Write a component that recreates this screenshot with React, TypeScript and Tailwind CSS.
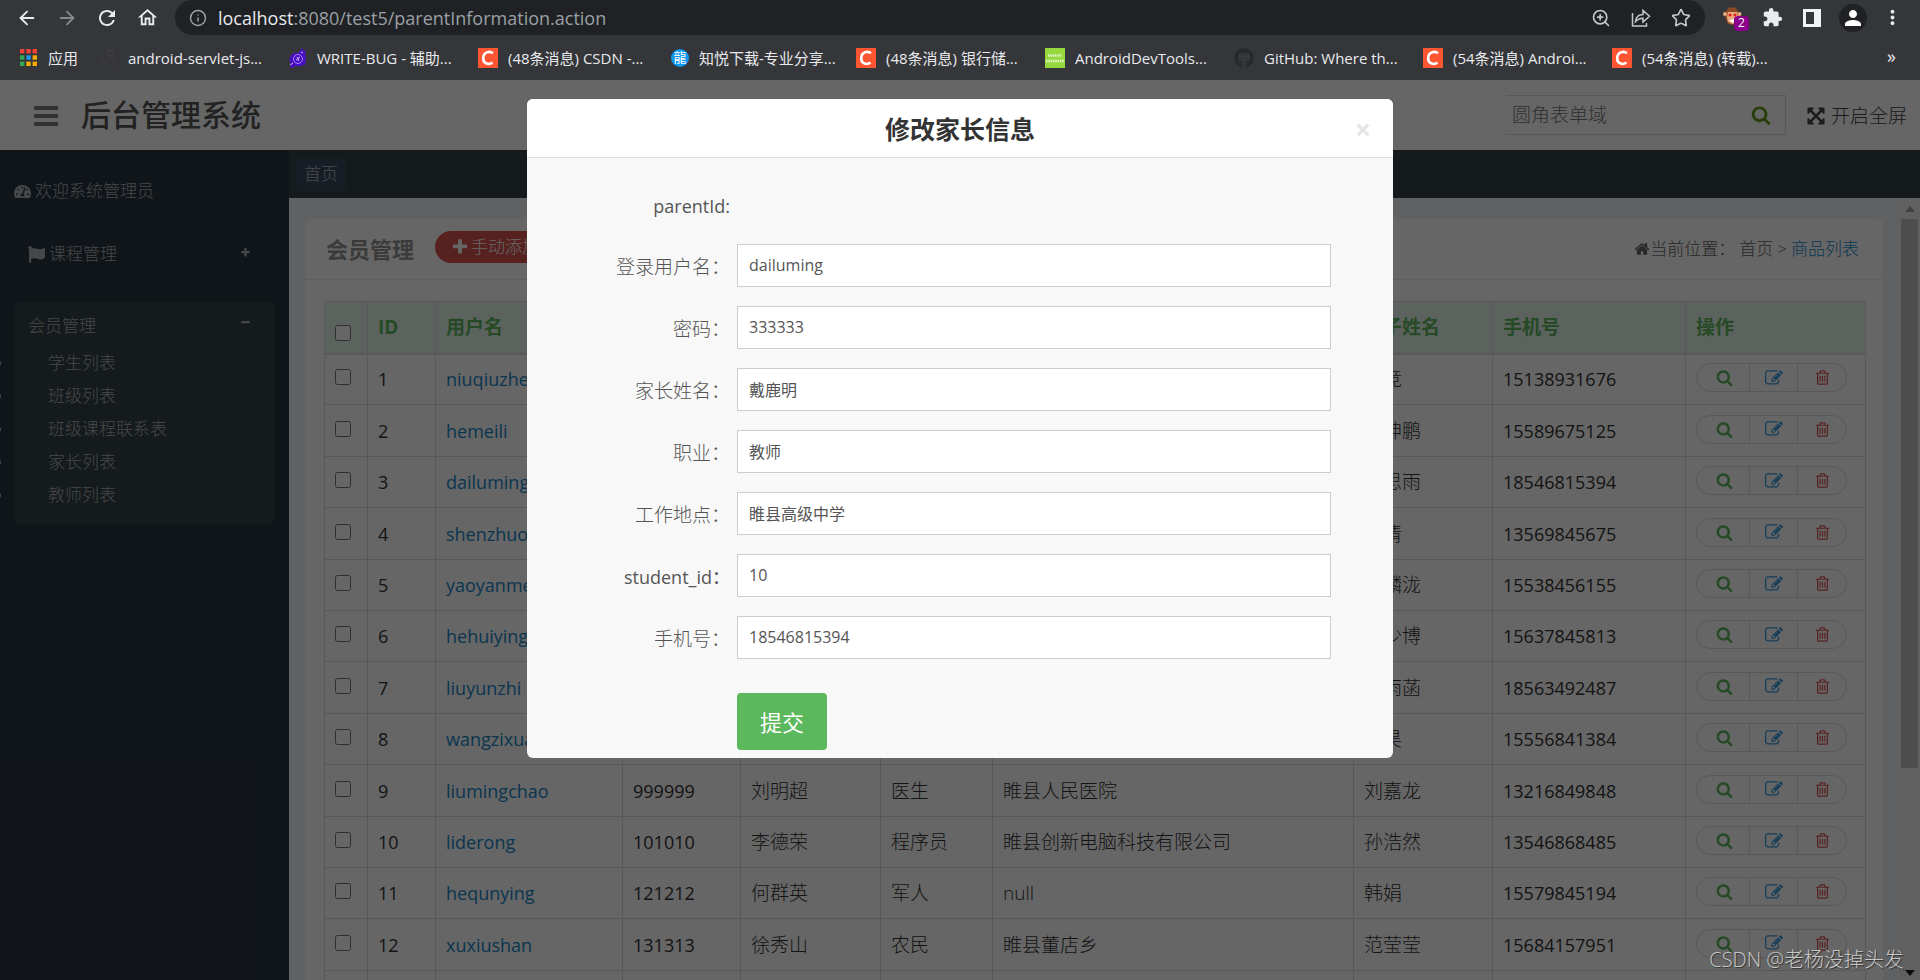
import { useState, type ReactNode } from 'react';
import { ArrowLeft, ArrowRight, Info, Star, ZoomIn } from 'lucide-react';
import { FaFlag, FaGithub, FaTachometerAlt } from 'react-icons/fa';
import { MdExtension, MdMoreVert, MdOutlineHome, MdPerson, MdRefresh } from 'react-icons/md';
import { clsx } from 'clsx';

const ICONS = {
  search:
    'M1216 832q0-185-131.5-316.5t-316.5-131.5-316.5 131.5-131.5 316.5 131.5 316.5 316.5 131.5 316.5-131.5 131.5-316.5zm512 832q0 52-38 90t-90 38q-54 0-90-38l-343-342q-179 124-399 124-143 0-273.5-55.5t-225-150-150-225-55.5-273.5 55.5-273.5 150-225 225-150 273.5-55.5 273.5 55.5 225 150 150 225 55.5 273.5q0 220-124 399l343 343q37 37 37 90z',
  edit: 'M888 1184l116-116-152-152-116 116v56h96v96h56zm440-720q-16-16-33 1l-350 350q-17 17-1 33t33-1l350-350q17-17 1-33zm80 594v190q0 119-84.5 203.5t-203.5 84.5h-832q-119 0-203.5-84.5t-84.5-203.5v-832q0-119 84.5-203.5t203.5-84.5h832q63 0 117 25 15 7 18 23 3 17-9 29l-49 49q-14 14-32 8-23-6-45-6h-832q-66 0-113 47t-47 113v832q0 66 47 113t113 47h832q66 0 113-47t47-113v-126q0-13 9-22l64-64q15-15 35-7t20 29zm-96-738l288 288-672 672h-288v-288zm444 132l-92 92-288-288 92-92q28-28 68-28t68 28l152 152q28 28 28 68t-28 68z',
  trash:
    'M704 736v576q0 14-9 23t-23 9h-64q-14 0-23-9t-9-23v-576q0-14 9-23t23-9h64q14 0 23 9t9 23zm256 0v576q0 14-9 23t-23 9h-64q-14 0-23-9t-9-23v-576q0-14 9-23t23-9h64q14 0 23 9t9 23zm256 0v576q0 14-9 23t-23 9h-64q-14 0-23-9t-9-23v-576q0-14 9-23t23-9h64q14 0 23 9t9 23zm128 724v-948h-896v948q0 22 7 40.5t14.5 27 10.5 8.5h832q3 0 10.5-8.5t14.5-27 7-40.5zm-672-1076h448l-48-117q-7-9-17-11h-317q-10 2-17 11zm928 32v64q0 14-9 23t-23 9h-96v948q0 83-47 143.5t-113 60.5h-832q-66 0-113-58.5t-47-141.5v-952h-96q-14 0-23-9t-9-23v-64q0-14 9-23t23-9h309l70-167q15-37 54-63t79-26h320q40 0 79 26t54 63l70 167h309q14 0 23 9t9 23z',
  plus: 'M1600 736v192q0 40-28 68t-68 28h-416v416q0 40-28 68t-68 28h-192q-40 0-68-28t-28-68v-416h-416q-40 0-68-28t-28-68v-192q0-40 28-68t68-28h416v-416q0-40 28-68t68-28h192q40 0 68 28t28 68v416h416q40 0 68 28t28 68z',
  minus: 'M1600 736v192q0 40-28 68t-68 28h-1216q-40 0-68-28t-28-68v-192q0-40 28-68t68-28h1216q40 0 68 28t28 68z',
  bars: 'M1664 1344v128q0 26-19 45t-45 19h-1408q-26 0-45-19t-19-45v-128q0-26 19-45t45-19h1408q26 0 45 19t19 45zm0-512v128q0 26-19 45t-45 19h-1408q-26 0-45-19t-19-45v-128q0-26 19-45t45-19h1408q26 0 45 19t19 45zm0-512v128q0 26-19 45t-45 19h-1408q-26 0-45-19t-19-45v-128q0-26 19-45t45-19h1408q26 0 45 19t19 45z',
  home: 'M1472 992v480q0 26-19 45t-45 19h-384v-384h-256v384h-384q-26 0-45-19t-19-45v-480q0-1 .5-3t.5-3l575-474 575 474q1 2 1 6zm223-69l-62 74q-8 9-21 11h-3q-13 0-21-7l-692-577-692 577q-12 8-24 7-13-2-21-11l-62-74q-8-10-7-23.5t11-21.5l719-599q32-26 76-26t76 26l244 204v-195q0-14 9-23t23-9h192q14 0 23 9t9 23v408l219 182q10 8 11 21.5t-7 23.5z',
  expand:
    'M1411 541l-355 355 355 355 144-144q29-31 70-14 39 17 39 59v448q0 26-19 45t-45 19h-448q-42 0-59-40-17-39 14-69l144-144-355-355-355 355 144 144q31 30 14 69-17 40-59 40h-448q-26 0-45-19t-19-45v-448q0-42 40-59 39-17 69 14l144 144 355-355-355-355-144 144q-19 19-45 19-12 0-24-5-40-17-40-59v-448q0-26 19-45t45-19h448q42 0 59 40 17 39-14 69l-144 144 355 355 355-355-144-144q-31-30-14-69 17-40 59-40h448q26 0 45 19t19 45v448q0 42-39 59-13 5-25 5-26 0-45-19z',
};

function Icon({ name, className }: { name: keyof typeof ICONS; className?: string }) {
  return (
    <svg viewBox="0 0 1792 1792" fill="currentColor" className={clsx('shrink-0', className)} aria-hidden="true">
      <path d={ICONS[name]} />
    </svg>
  );
}

interface Parent {
  id: number;
  username: string;
  password: string;
  name: string;
  job: string;
  address: string;
  child: string;
  phone: string;
}

const PARENTS: Parent[] = [
  { id: 1, username: 'niuqiuzhen', password: '111111', name: '牛秋振', job: '教师', address: '睢县高级中学', child: '牛竞', phone: '15138931676' },
  { id: 2, username: 'hemeili', password: '222222', name: '何美丽', job: '教师', address: '睢县高级中学', child: '李坤鹏', phone: '15589675125' },
  { id: 3, username: 'dailuming', password: '333333', name: '戴鹿明', job: '教师', address: '睢县高级中学', child: '戴思雨', phone: '18546815394' },
  { id: 4, username: 'shenzhuo', password: '444444', name: '申卓', job: '农民', address: '睢县董店乡', child: '申倩', phone: '13569845675' },
  { id: 5, username: 'yaoyanmei', password: '555555', name: '姚艳梅', job: '医生', address: '睢县人民医院', child: '王麟泷', phone: '15538456155' },
  { id: 6, username: 'hehuiying', password: '666666', name: '何慧英', job: '农民', address: '睢县董店乡', child: '张少博', phone: '15637845813' },
  { id: 7, username: 'liuyunzhi', password: '777777', name: '刘云芝', job: '农民', address: '睢县董店乡', child: '陈雨菡', phone: '18563492487' },
  { id: 8, username: 'wangzixuan', password: '888888', name: '王梓轩', job: '农民', address: '睢县董店乡', child: '王昊', phone: '15556841384' },
  { id: 9, username: 'liumingchao', password: '999999', name: '刘明超', job: '医生', address: '睢县人民医院', child: '刘嘉龙', phone: '13216849848' },
  { id: 10, username: 'liderong', password: '101010', name: '李德荣', job: '程序员', address: '睢县创新电脑科技有限公司', child: '孙浩然', phone: '13546868485' },
  { id: 11, username: 'hequnying', password: '121212', name: '何群英', job: '军人', address: 'null', child: '韩娟', phone: '15579845194' },
  { id: 12, username: 'xuxiushan', password: '131313', name: '徐秀山', job: '农民', address: '睢县董店乡', child: '范莹莹', phone: '15684157951' },
  { id: 13, username: 'zhanghong', password: '141414', name: '张红', job: '农民', address: '睢县董店乡', child: '张雪', phone: '15684157952' },
];

const COLUMNS = ['ID', '用户名', '密码', '家长姓名', '职业', '工作地点', '孩子姓名', '手机号', '操作'];

const SUB_MENU = ['学生列表', '班级列表', '班级课程联系表', '家长列表', '教师列表'];

const FIELDS = [
  { id: 'username', label: '登录用户名：', value: 'dailuming' },
  { id: 'password', label: '密码：', value: '333333' },
  { id: 'name', label: '家长姓名：', value: '戴鹿明' },
  { id: 'job', label: '职业：', value: '教师' },
  { id: 'address', label: '工作地点：', value: '睢县高级中学' },
  { id: 'student', label: 'student_id：', value: '10' },
  { id: 'phone', label: '手机号：', value: '18546815394' },
];

function CsdnIcon() {
  return (
    <svg viewBox="0 0 20 20" className="size-5 shrink-0" aria-hidden="true">
      <rect width="20" height="20" fill="#fc5531" />
      <path d="M15 5.2C11.5 2.6 5.4 4 5.2 10.2c0 6 5.800 6.800 9.300 4.500" fill="none" stroke="#fff" strokeWidth="2.600" />
    </svg>
  );
}

function AppsIcon() {
  const colors = ['#f44336', '#f44336', '#f44336', '#34a853', '#2196f3', '#fbab00', '#34a853', '#fbab00', '#fbab00'];
  return (
    <svg viewBox="0 0 17 17" className="size-[17px] shrink-0" aria-hidden="true">
      {colors.map((c, i) => (
        <rect key={i} x={(i % 3) * 6.3} y={Math.floor(i / 3) * 6.3} width="4.4" height="4.4" fill={c} />
      ))}
    </svg>
  );
}

const BOOKMARKS: { title: string; icon: ReactNode }[] = [
  {
    title: 'android-servlet-js...',
    icon: (
      <svg viewBox="0 0 18 18" className="size-[18px] shrink-0" fill="none" stroke="#463c3a" aria-hidden="true">
        <circle cx="10" cy="4" r="3" />
        <path d="M1 7l2 7c3 3 6-3 8-7l2 4 3 6M11 8l2 3" />
      </svg>
    ),
  },
  {
    title: 'WRITE-BUG - 辅助...',
    icon: (
      <svg viewBox="0 0 18 20" className="h-5 w-[18px] shrink-0" aria-hidden="true">
        <path d="M11 3l2-3 1 2 3 1-1 3q2 4 0 8l1 2-3 1q-2 2-5 1l-3 0-3 2-2-1 1-3q-3-4 0-8 2-4 7-3z" fill="#4a0fc4" />
        <circle cx="9" cy="11" r="4.5" fill="none" stroke="#b79cf0" strokeWidth=".8" />
        <path d="M7 12l4-3M8 9q3 2 1 4M1 17l3-2M12 4l2 1" stroke="#c9b6f2" fill="none" />
      </svg>
    ),
  },
  { title: '(48条消息) CSDN -...', icon: <CsdnIcon /> },
  {
    title: '知悦下载-专业分享...',
    icon: (
      <span className="ml-1 flex size-[18px] shrink-0 items-center justify-center rounded-full bg-[#0c96f5] text-[13px] leading-none text-white">
        龍
      </span>
    ),
  },
  { title: '(48条消息) 银行储...', icon: <CsdnIcon /> },
  {
    title: 'AndroidDevTools...',
    icon: (
      <svg viewBox="0 0 20 20" className="size-5 shrink-0" aria-hidden="true">
        <rect width="20" height="20" fill="#97d83f" />
        <path d="M3 7.5h14" stroke="#e2f5c8" strokeWidth="2.5" strokeDasharray="1.5 .8" />
        <path d="M1 13h18" stroke="#e2f5c8" strokeWidth="2.5" strokeDasharray="1.5 .8" />
      </svg>
    ),
  },
  { title: 'GitHub: Where th...', icon: <FaGithub className="size-5 shrink-0 text-[#24292e]" /> },
  { title: '(54条消息) Androi...', icon: <CsdnIcon /> },
  { title: '(54条消息) (转载)...', icon: <CsdnIcon /> },
];

function BrowserBar() {
  return (
    <header className="h-20 shrink-0 bg-[#35363a] text-[#e8eaed]">
      <div className="flex h-[35px] items-center">
        <div className="flex w-[175px] shrink-0 items-center gap-[18px] pl-4">
          <button aria-label="后退" className="flex size-[22px] items-center justify-center">
            <ArrowLeft className="size-[22px]" strokeWidth={2} />
          </button>
          <button aria-label="前进" className="flex size-[22px] items-center justify-center text-[#86888a]">
            <ArrowRight className="size-[22px]" strokeWidth={2} />
          </button>
          <button aria-label="刷新" className="flex size-[22px] items-center justify-center">
            <MdRefresh className="size-6 shrink-0" />
          </button>
          <button aria-label="主页" className="flex size-[22px] items-center justify-center">
            <MdOutlineHome className="size-[23px] shrink-0" />
          </button>
        </div>
        <div className="flex h-[35px] flex-1 items-center rounded-full bg-[#202124] px-3.5">
          <Info className="size-[18px] text-[#9aa0a6]" />
          <div className="ml-[11px] flex-1 text-[18px] leading-6 text-[#9aa0a6]">
            <span className="text-[#e8eaed]">localhost</span>:8080/test5/parentInformation.action
          </div>
          <div className="flex items-center gap-5 text-[#c4c7c9]">
            <ZoomIn className="size-5" strokeWidth={2} />
            <svg viewBox="0 0 20 20" className="size-5" fill="none" stroke="currentColor" strokeWidth="1.5" aria-hidden="true">
              <path d="M1.500 5v13h14v-3" />
              <path d="M4.500 13.500c.5-4.500 3-7 7.500-7v-4l6.500 5.800-6.500 5.700v-3.800c-3.500 0-5.500 1-7.500 3.300z" />
            </svg>
            <Star className="size-5" strokeWidth={2} />
          </div>
        </div>
        <div className="flex w-[215px] shrink-0 items-center pl-4">
          <div className="relative size-6">
            <svg viewBox="0 0 24 24" className="size-6" aria-hidden="true">
              <path d="M5 5l3-4 3 1 3-1 3 4 1 6-2 6-4 2-5-1-3-7z" fill="#8b4a22" />
              <path d="M7 6h9l1 5-2 6-4 1-4-2-1-5z" fill="#e8ab7c" />
              <circle cx="4" cy="8" r="2" fill="#e8ab7c" />
              <circle cx="18.5" cy="8" r="2" fill="#e8ab7c" />
              <circle cx="9" cy="9" r="1.5" fill="#e01b1b" />
              <circle cx="14" cy="9" r="1.5" fill="#e01b1b" />
              <path d="M8 14l7-1-3 4z" fill="#fff" />
            </svg>
            <span className="absolute top-[10px] left-[13px] flex h-[15px] w-[15px] items-center justify-center rounded-sm bg-[#8b008b] text-[12px] leading-none text-white">
              2
            </span>
          </div>
          <MdExtension className="ml-[17px] size-[21px]" />
          <svg viewBox="0 0 18 18" className="ml-5 size-[18px]" aria-hidden="true">
            <path d="M0 0h18v18H0zM3 3v12h8V3z" fill="#f1f3f4" fillRule="evenodd" />
          </svg>
          <span className="ml-[18px] flex size-7 items-center justify-center rounded-full bg-[#202124]">
            <MdPerson className="size-6 text-white" />
          </span>
          <MdMoreVert className="ml-3.5 size-[23px]" />
        </div>
      </div>
      <nav className="flex h-[45px] items-center px-5 text-[15px] leading-5 whitespace-nowrap">
        <a href="#" className="flex w-20 shrink-0 items-center gap-[11px]">
          <AppsIcon />
          应用
        </a>
        {BOOKMARKS.map((b) => (
          <a key={b.title} href="#" className="flex w-[189px] shrink-0 items-center gap-2.5">
            {b.icon}
            {b.title}
          </a>
        ))}
        <span className="ml-auto pr-1 pb-1 text-[18px]">»</span>
      </nav>
    </header>
  );
}

function TopHeader() {
  return (
    <div className="flex h-[70px] shrink-0 items-center bg-white pr-[13px] pl-8">
      <button aria-label="菜单" className="pt-0.5 text-[#797979]">
        <Icon name="bars" className="size-7" />
      </button>
      <h1 className="ml-[21px] text-[30px] leading-10 font-medium text-[#555]">后台管理系统</h1>
      <div className="ml-auto flex h-10 w-[280px] items-center border border-l-0 border-[#ddd] pr-3.5 pl-1.5">
        <input
          aria-label="搜索"
          placeholder="圆角表单域"
          className="min-w-0 flex-1 text-[19px] leading-6 font-light outline-none placeholder:text-[#777]"
        />
        <Icon name="search" className="size-5 text-[#639f16]" />
      </div>
      <button className="ml-5 flex items-center gap-[5px] pt-0.5 text-[19px] leading-6 font-light text-[#444]">
        <Icon name="expand" className="size-5" />
        开启全屏
      </button>
    </div>
  );
}

function Sidebar() {
  return (
    <aside className="w-[289px] shrink-0 bg-[#2a3542] text-[17px] leading-6 font-light text-[#aeb2b7]">
      <div className="mt-[29px] flex items-center gap-1 px-3.5">
        <FaTachometerAlt className="size-[17px]" />
        欢迎系统管理员
      </div>
      <a href="#" className="mx-3.5 mt-[39px] flex items-center gap-1 px-3.5">
        <FaFlag className="size-[17px]" />
        课程管理
        <Icon name="plus" className="mr-2.5 mb-1 ml-auto size-[11px]" />
      </a>
      <div className="mx-3.5 mt-9 h-[222px] rounded-md bg-[#35424a] pt-3">
        <a href="#" className="flex items-center px-3.5">
          会员管理
          <Icon name="minus" className="mr-2.5 mb-2 ml-auto size-[11px]" />
        </a>
        <ul className="mt-[9px]">
          {SUB_MENU.map((item) => (
            <li key={item} className="relative h-[33px] pt-1 pl-[34px]">
              <span className="absolute top-3.5 -left-[18px] size-[5px] rounded-full bg-[#aeb2b7]" />
              <a href="#">{item}</a>
            </li>
          ))}
        </ul>
      </div>
    </aside>
  );
}

function RowActions({ name }: { name: string }) {
  return (
    <div className="mb-[3px] flex h-[29px] w-[151px] rounded-full border border-[#ddd]">
      <button aria-label={`查看 ${name}`} className="flex flex-1 items-center justify-center pl-1 text-[#5cb85c]">
        <Icon name="search" className="size-[17px]" />
      </button>
      <button aria-label={`编辑 ${name}`} className="flex flex-1 items-center justify-center border-x border-[#ddd] text-[#3498db]">
        <Icon name="edit" className="size-[18px]" />
      </button>
      <button aria-label={`删除 ${name}`} className="flex flex-1 items-center justify-center text-[#d9534f]">
        <Icon name="trash" className="size-[17px]" />
      </button>
    </div>
  );
}

const cell = 'border border-[#ddd] px-2.5';
const latinCell = 'border border-[#ddd] px-2.5 text-[18px] font-normal';
const box = 'block size-4';

function ParentTable() {
  return (
    <table className="w-full table-fixed border-collapse text-left font-light text-[#333]">
      <colgroup>
        <col className="w-[43px]" />
        <col className="w-[68px]" />
        <col className="w-[187px]" />
        <col className="w-[118px]" />
        <col className="w-[140px]" />
        <col className="w-[112px]" />
        <col />
        <col className="w-[139px]" />
        <col className="w-[193px]" />
        <col className="w-[180px]" />
      </colgroup>
      <thead>
        <tr className="h-[52px] bg-[#e6f5e9] text-[19px] leading-6 text-[#5cb85c]">
          <th className="border border-b-2 border-[#ddd] px-2.5 pt-3">
            <input type="checkbox" aria-label="全选" className={box} />
          </th>
          {COLUMNS.map((c) => (
            <th key={c} className="border border-b-2 border-[#ddd] px-2.5 font-bold">
              {c}
            </th>
          ))}
        </tr>
      </thead>
      <tbody>
        {PARENTS.map((p) => (
          <tr key={p.id} className="h-[51px] text-[19px] leading-6 nth-[5n+2]:h-[52px] nth-[5n+4]:h-[52px]">
            <td className="border border-[#ddd] px-2.5 pb-1">
              <input type="checkbox" aria-label={p.username} className={box} />
            </td>
            <td className={latinCell}>{p.id}</td>
            <td className={latinCell}>
              <a href="#" className="text-[#2086c8]">
                {p.username}
              </a>
            </td>
            <td className={latinCell}>{p.password}</td>
            <td className={cell}>{p.name}</td>
            <td className={cell}>{p.job}</td>
            <td className={cell}>{p.address}</td>
            <td className={cell}>{p.child}</td>
            <td className={latinCell}>{p.phone}</td>
            <td className="border border-[#ddd] px-2.5">
              <RowActions name={p.username} />
            </td>
          </tr>
        ))}
      </tbody>
    </table>
  );
}

function Content() {
  return (
    <div className="flex min-w-0 flex-1 flex-col">
      <div className="flex h-12 shrink-0 items-center bg-[#35424a] px-[7px]">
        <a href="#" className="flex h-[33px] items-center rounded bg-[#3b4a5c] px-[8px] text-[17px] leading-6 font-light text-[#b5b9bf]">
          首页
        </a>
      </div>
      <div className="flex min-h-0 flex-1 bg-[#f1f2f7]">
        <section className="mx-4 mt-[21px] min-w-0 flex-1 overflow-hidden rounded-t-md bg-white">
          <div className="flex h-[61px] items-center border-b border-[#eee] pr-6 pl-[21px]">
            <h2 className="text-[22px] leading-8 font-bold text-[#939393]">会员管理</h2>
            <button className="mb-1 ml-[21px] flex h-8 items-center gap-0.5 rounded-full bg-[#d9534f] px-4 text-[17px] leading-6 font-light text-white">
              <Icon name="plus" className="size-[18px]" />
              手动添加
            </button>
            <div className="ml-auto flex items-center text-[17px] leading-6 font-light text-[#666]">
              <Icon name="home" className="size-4" />
              当前位置：
              <a href="#" className="ml-1">
                首页
              </a>
              <span className="mx-1">&gt;</span>
              <a href="#" className="text-[#1c8fd6]">
                商品列表
              </a>
            </div>
          </div>
          <div className="pt-[21px] pr-[17px] pl-[19px]">
            <ParentTable />
          </div>
        </section>
        {/* scroll bar */}
        <div className="flex w-[21px] shrink-0 flex-col items-center bg-[#f1f1f1] pb-1">
          <div className="mt-2 h-0 w-0 border-x-[5px] border-b-[6px] border-x-transparent border-b-[#a0a0a0]" />
          <div className="mt-[7px] h-[549px] w-[17px] bg-[#c1c1c1]" />
          <div className="mt-auto h-0 w-0 border-x-[5px] border-t-[6px] border-x-transparent border-t-[#222]" />
        </div>
      </div>
    </div>
  );
}

function EditModal({ onClose }: { onClose: () => void }) {
  return (
    <div className="absolute inset-0 flex items-start justify-center bg-black/60 pt-[19px]">
      <form
        role="dialog"
        aria-labelledby="modal-title"
        className="w-[866px] overflow-hidden rounded-md bg-[#f8f8f8] text-[#555]"
        onSubmit={(e) => e.preventDefault()}
      >
        <div className="relative flex h-[59px] items-center justify-center border-b border-[#ddd] bg-white">
          <h2 id="modal-title" className="pt-0.5 text-[25px] leading-8 font-bold text-[#333]">
            修改家长信息
          </h2>
          <button
            type="button"
            aria-label="关闭"
            onClick={onClose}
            className="absolute top-3.5 right-[22px] text-[28px] leading-8 font-bold text-[#e5e5e5]"
          >
            ×
          </button>
        </div>
        <div className="flex flex-col gap-[19px] pt-6 pr-[62px]">
          <div className="flex h-[43px] items-center">
            <span className="w-[203px] pt-1 text-right text-[18px] leading-6">parentId:</span>
          </div>
          {FIELDS.map((f) => (
            <div key={f.id} className="flex h-[43px] items-center gap-[7px]">
              <label
                htmlFor={f.id}
                className={clsx(
                  'w-[203px] shrink-0 pt-0.5 text-right leading-6',
                  f.id === 'student' ? 'text-[18px]' : 'text-[19px] font-light'
                )}
              >
                {f.label}
              </label>
              <input
                id={f.id}
                defaultValue={f.value}
                className="h-full min-w-0 flex-1 border border-[#ccc] bg-white px-[11px] pb-0.5 text-[16px] outline-none"
              />
            </div>
          ))}
        </div>
        <button className="mt-[34px] mb-2 ml-[210px] h-[57px] rounded bg-[#5cb85c] px-[23px] text-[22px] leading-8 text-white">
          提交
        </button>
      </form>
    </div>
  );
}

export default function App() {
  const [open, setOpen] = useState(true);

  return (
    <div className="flex h-screen flex-col overflow-hidden font-['Open_Sans','Noto_Sans_CJK_SC',sans-serif]">
      <BrowserBar />
      <div className="relative flex min-h-0 flex-1 flex-col bg-white">
        <TopHeader />
        <div className="flex min-h-0 flex-1">
          <Sidebar />
          <Content />
        </div>
        {open && <EditModal onClose={() => setOpen(false)} />}
        <span className="absolute right-4 bottom-1 text-[20px] leading-8 font-light text-[#c8c8c8] text-shadow-[1px_1px_1px_#0008]">
          CSDN @老杨没掉头发
        </span>
      </div>
    </div>
  );
}
